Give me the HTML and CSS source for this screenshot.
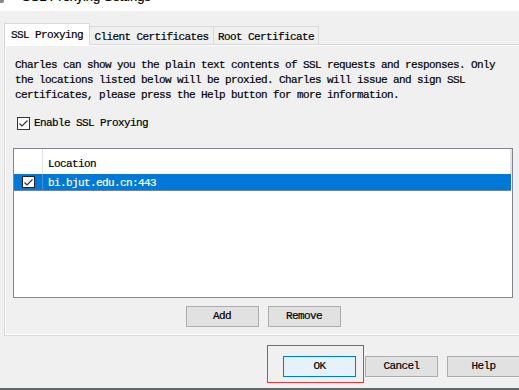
FILE: index.html
```html
<!DOCTYPE html>
<html>
<head>
<meta charset="utf-8">
<link rel="stylesheet" href="styles.css">
</head>
<body>
<div class="window">
  <div class="titlebar">
    <span class="ticon"></span>
    <span class="ttext">SSL Proxying Settings</span>
  </div>
  <div class="tabs">
    <div class="tab active">SSL Proxying</div>
    <div class="tab t2">Client Certificates</div>
    <div class="tab t3">Root Certificate</div>
  </div>
  <div class="panel">
    <p class="desc">Charles can show you the plain text contents of SSL requests and responses. Only<br>the locations listed below will be proxied. Charles will issue and sign SSL<br>certificates, please press the Help button for more information.</p>
    <div class="check">
      <span class="cb"><svg width="11" height="11" viewBox="0 0 11 11"><polyline points="1.5,5.5 4,8 9.5,2.5" fill="none" stroke="#333" stroke-width="1.2"/></svg></span>
      <span class="checklabel">Enable SSL Proxying</span>
    </div>
    <div class="table">
      <div class="thead">
        <div class="c1"></div>
        <div class="c2">Location</div>
        <div class="c3"></div>
      </div>
      <div class="row sel">
        <div class="c1"><span class="cb rcb"><svg width="11" height="11" viewBox="0 0 11 11"><polyline points="1.5,5.5 4,8 9.5,2.5" fill="none" stroke="#333" stroke-width="1.2"/></svg></span></div>
        <div class="c2">bi.bjut.edu.cn:443</div>
      </div>
    </div>
    <div class="btns">
      <button class="btn">Add</button>
      <button class="btn">Remove</button>
    </div>
  </div>
  <div class="footer">
    <button class="btn ok">OK</button>
    <button class="btn">Cancel</button>
    <button class="btn">Help</button>
    <div class="redbox"></div>
  </div>
  <div class="bottomline"></div>
</div>
</body>
</html>
```
FILE: styles.css
```css
* { box-sizing: border-box; }
html, body { margin: 0; padding: 0; }
body {
  width: 519px;
  height: 390px;
  overflow: hidden;
  background: #f0f0f0;
  font-family: "Liberation Mono", monospace;
  font-size: 11px;
  letter-spacing: -0.6px;
  color: #000;
  -webkit-text-stroke: 0.2px currentColor;
}
.window {
  position: relative;
  width: 519px;
  height: 390px;
  overflow: hidden;
}
.titlebar {
  height: 11px;
  background: #fff;
  overflow: hidden;
  display: flex;
  align-items: flex-start;
}
.ticon {
  width: 4px;
  height: 3px;
  background: #8a8a8a;
  border-radius: 0 0 2px 0;
}
.ttext {
  font-family: "Liberation Sans", sans-serif;
  letter-spacing: 0;
  font-size: 13px;
  line-height: 13px;
  margin-left: 18px;
  margin-top: -10px;
  color: #000;
}
.tabs {
  display: flex;
  align-items: flex-end;
  height: 33px;
  padding-left: 4px;
}
.tab {
  border: 1px solid #d9d9d9;
  border-bottom: none;
  text-align: center;
  line-height: 15px;
  white-space: nowrap;
}
.tab.active {
  position: relative;
  z-index: 1;
  width: 86px;
  height: 22px;
  margin-bottom: -1px;
  padding-top: 4px;
  background: #fff;
}
.tab.t2 {
  width: 124px;
  height: 18px;
  border-left: none;
  padding-top: 3px;
  background: #f0f0f0;
}
.tab.t3 {
  width: 105px;
  height: 18px;
  border-left: none;
  padding-top: 3px;
  background: #f0f0f0;
}
.panel {
  margin-left: 4px;
  width: 540px;
  height: 292px;
  border: 1px solid #d9d9d9;
  box-shadow: inset 1px 1px 0 #fff, inset 0 -1px 0 #fff;
  padding-left: 8px;
}
.desc {
  margin: 13px 0 0 2px;
  line-height: 15px;
  white-space: nowrap;
}
.check {
  display: flex;
  align-items: center;
  height: 15px;
  margin-top: 13px;
  margin-left: 4px;
  line-height: 15px;
}
.cb {
  width: 13px;
  height: 13px;
  border: 1px solid #333;
  background: #fff;
  display: flex;
  align-items: center;
  justify-content: center;
  -webkit-text-stroke: 0;
}
.checklabel {
  margin-left: 4px;
}
.table {
  margin-top: 17px;
  width: 500px;
  height: 150px;
  border: 1px solid #828790;
  background: #fff;
}
.thead {
  display: flex;
  height: 25px;
}
.thead .c1 {
  width: 29px;
  border-right: 1px solid #e5e5e5;
}
.thead .c2 {
  flex: 1;
  padding: 8px 0 0 5px;
  line-height: 15px;
}
.thead .c3 {
  width: 2px;
  background: #e3e3e3;
}
.row {
  display: flex;
  height: 17px;
}
.row.sel {
  background: #0078d7;
  color: #fff;
  border-bottom: 1px solid #7a8590;
  margin-right: 1px;
}
.row .c1 {
  width: 29px;
  border-right: 1px solid #4a90d0;
  padding: 2px 0 0 8px;
}
.rcb {
  width: 13px;
  height: 12px;
  border-color: #222;
}
.row .c2 {
  padding: 2px 0 0 5px;
  line-height: 15px;
}
.btns {
  display: flex;
  justify-content: center;
  gap: 9px;
  width: 500px;
  margin-top: 8px;
}
.btn {
  width: 73px;
  height: 21px;
  border: 1px solid #adadad;
  background: #e1e1e1;
  font-family: "Liberation Mono", monospace;
  font-size: 11px;
  letter-spacing: -0.6px;
  -webkit-text-stroke: 0.2px #000;
  line-height: 19px;
  padding: 0;
  color: #000;
  flex: none;
}
.footer {
  display: flex;
  gap: 9px;
  padding-left: 283px;
  margin-top: 20px;
}
.btn.ok {
  border-color: #0078d7;
  background: #e5f1fb;
}
.redbox {
  position: absolute;
  left: 267px;
  top: 345px;
  width: 97px;
  height: 38px;
  border: 1px solid #e8393d;
}
.bottomline {
  position: absolute;
  left: 0;
  bottom: 0;
  width: 519px;
  height: 2px;
  background: #5f6b6b;
}
```
